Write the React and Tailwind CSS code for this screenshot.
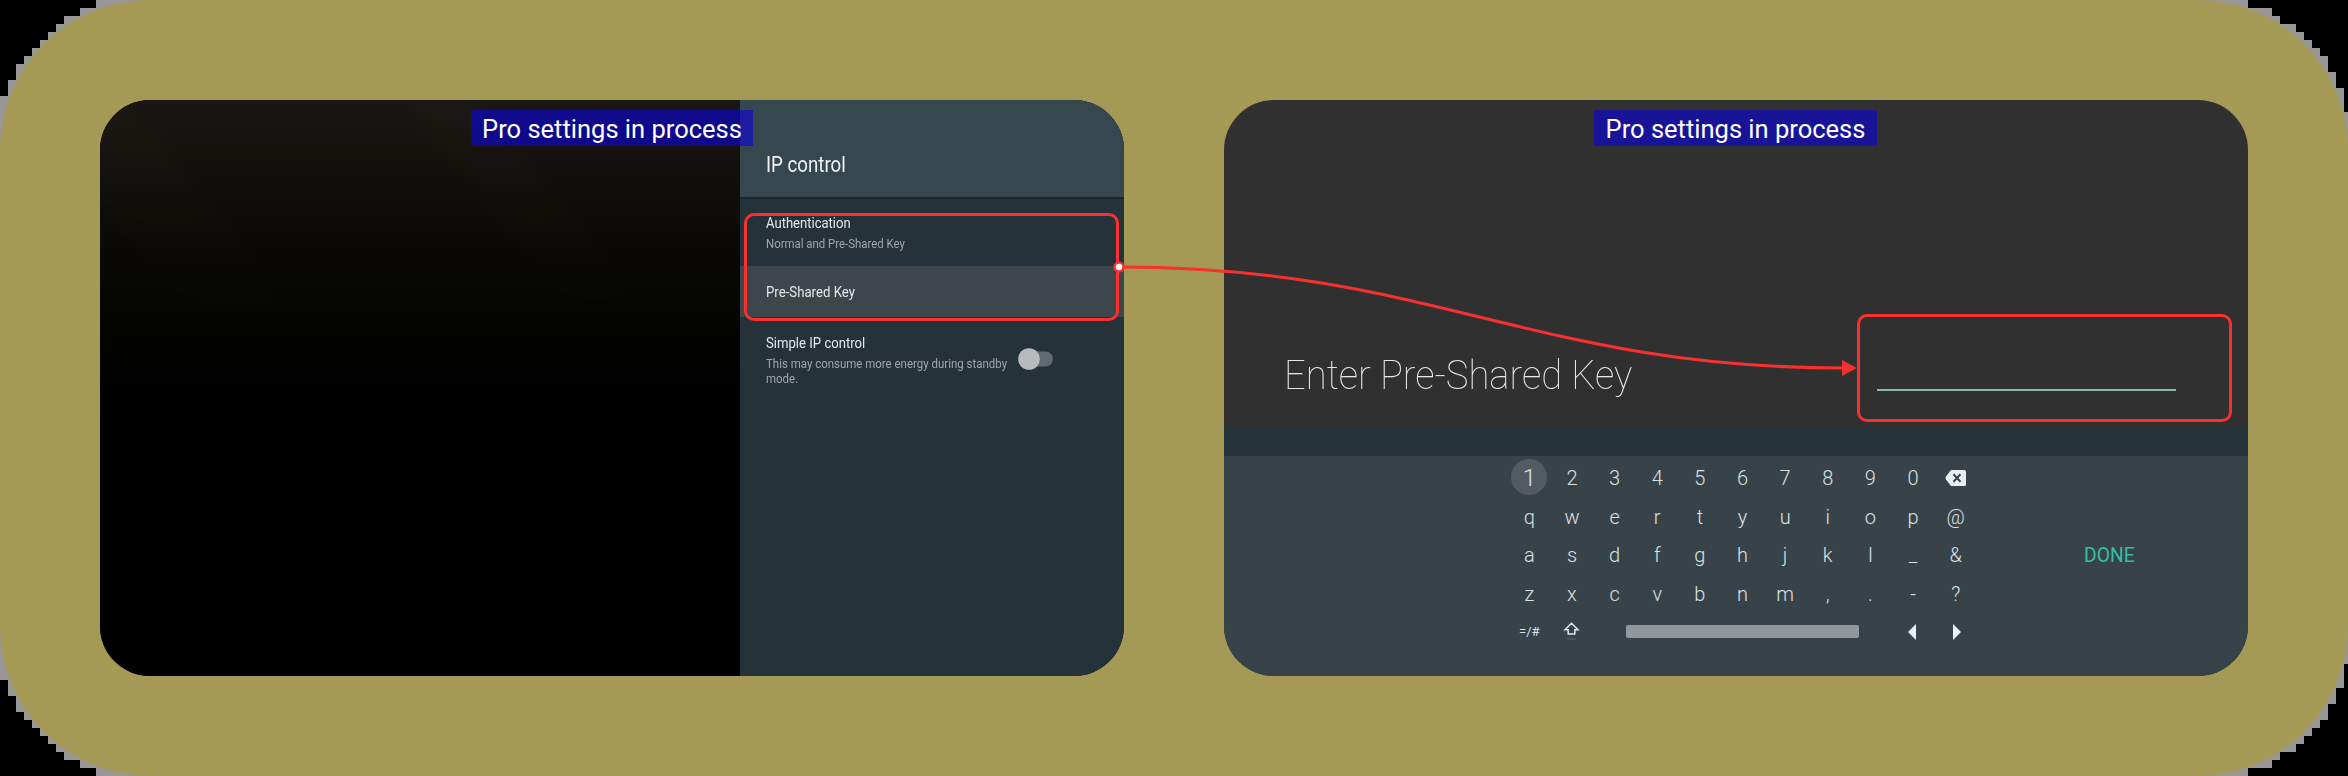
const RED = "#f83030";

const cornerLeft = [[0, 96], [8, 80], [16, 64], [24, 56], [32, 48], [40, 40], [48, 32], [56, 24], [64, 16], [72, 16], [80, 8], [88, 8]];
const cornerRight = [[0, 2248], [8, 2272], [16, 2280], [24, 2296], [32, 2304], [40, 2312], [48, 2320], [56, 2328], [64, 2328], [72, 2336], [80, 2336], [88, 2344], [96, 2344], [104, 2344]];

const rows = ["1234567890", "qwertyuiop@", "asdfghjkl_&", "zxcvbnm,.-?"];

function Backdrop() {
  return (
    <svg className="absolute inset-0" width="2348" height="776" shapeRendering="crispEdges">
      {cornerLeft.map(([y, w]) => (
        <g key={y}>
          <rect x="0" y={y} width={w} height="8" />
          <rect x="0" y={768 - y} width={w} height="8" />
        </g>
      ))}
      {cornerRight.map(([y, x]) => (
        <g key={y}>
          <rect x={x} y={y} width={2348 - x} height="8" />
          <rect x={x} y={768 - y} width={2348 - x} height="8" />
        </g>
      ))}
    </svg>
  );
}

function Label({ className }) {
  return (
    <div className={"absolute top-[10px] flex h-[36px] items-center justify-center rounded-[1px] bg-[rgba(12,4,215,0.62)] pt-[2px] text-[25.5px] text-white " + className}>
      <span className="whitespace-nowrap">Pro settings in process</span>
    </div>
  );
}

function T({ children, sx, className }) {
  return (
    <div className={"origin-left whitespace-nowrap " + className} style={{ transform: `scaleX(${sx})` }}>
      {children}
    </div>
  );
}

function Wallpaper() {
  return (
    <div className="w-[640px] bg-linear-to-b from-[#1a1613] via-[#040402] via-40% to-black to-60%">
      <svg width="640" height="576">
        <defs>
          <linearGradient id="ray" x1="0" y1="0" x2="0" y2="240" gradientUnits="userSpaceOnUse">
            <stop offset="0" stopColor="#fff8e0" stopOpacity="0.014" />
            <stop offset="1" stopColor="#fff8e0" stopOpacity="0" />
          </linearGradient>
          <filter id="soft" x="-20%" y="-20%" width="140%" height="140%">
            <feGaussianBlur stdDeviation="9" />
          </filter>
        </defs>
        <g fill="url(#ray)" filter="url(#soft)">
          <path d="M-10 -10L40 20L210 220L90 220L-10 90Z" />
          <path d="M300 -10H370L540 200H460Z" />
        </g>
      </svg>
    </div>
  );
}

function SettingsScreen() {
  return (
    <section className="relative flex h-[576px] w-[1024px] overflow-hidden rounded-[50px] bg-black">
      <Wallpaper />
      <div className="w-[384px] bg-[#263239]">
        <header className="flex h-[99px] items-center border-b-2 border-[#1d282e] bg-[#37474f] pt-[31px] pl-[26px] text-[#eef2f3]">
          <T sx={0.85} className="text-[22px]">IP control</T>
        </header>
        <div className="h-[67px] pt-[14px] pl-[26px]">
          <T sx={0.87} className="text-[15px] leading-[20px] text-[#e4e8ea]">Authentication</T>
          <T sx={0.95} className="mt-[2px] text-[12px] leading-[18px] text-[#a0a7ab]">Normal and Pre-Shared Key</T>
        </div>
        <div className="flex h-[51px] items-center bg-[#3d464b] pt-[1px] pl-[26px]">
          <T sx={0.88} className="text-[15px] text-[#e4e8ea]">Pre-Shared Key</T>
        </div>
        <div className="flex items-start justify-between pt-[16px] pr-[70px] pl-[26px]">
          <div className="w-[245px]">
            <T sx={0.875} className="text-[15px] leading-[20px] text-[#e4e8ea]">Simple IP control</T>
            <T sx={0.917} className="mt-[3px] text-[12.5px] leading-[15px] text-[#a0a7ab]">This may consume more energy during standby<br />mode.</T>
          </div>
          <svg className="mt-[14px]" width="36" height="24">
            <rect x="8" y="4.500" width="27" height="15" rx="7.500" fill="#616a6e" />
            <circle cx="11" cy="12" r="10.800" fill="#b9babb" />
          </svg>
        </div>
      </div>
      <Label className="left-[371px] w-[282px]" />
    </section>
  );
}

function Keyboard() {
  return (
    <div className="flex h-[220px] bg-[#384349]">
      <div className="ml-[284px] grid w-[469px] grid-cols-11 grid-rows-[42px_38px_38px_39px_37px] text-[20px] font-light text-[#dbe1e3]">
        {rows.map((row, r) => [
          ...row.split("").map((k) => (
            <div key={r + k} className={"flex items-center justify-center " + (r === 0 ? "pt-[2px]" : "")}>
              {k === "1" ? <span className="-mt-[2px] flex h-[36px] w-[36px] shrink-0 items-center justify-center rounded-full bg-[#525b61] pt-[2px] text-[24px]">1</span> : k}
            </div>
          )),
          r === 0 && (
            <div key="del" className="flex items-center justify-center pt-[2px]">
              <svg width="21" height="16" viewBox="0 0 21 16">
                <path d="M6 0H19.500Q21 0 21 1.500V14.500Q21 16 19.500 16H6L1 9.500Q0 8 1 6.500Z" fill="#eaeff1" />
                <path d="M8.500 4.300L15.500 11.700M15.500 4.300L8.500 11.700" stroke="#384349" strokeWidth="2" />
              </svg>
            </div>
          ),
        ])}
        <div className="flex items-center justify-center text-[13px] font-normal">=/#</div>
        <div className="flex items-center justify-center">
          <svg width="17" height="19" viewBox="0 0 17 19">
            <path d="M8.500 1.200L15 7.800H11.800V12H5.200V7.800H2Z" fill="none" stroke="#e1e7e9" strokeWidth="1.500" />
            <path d="M4.500 17H13" stroke="#4a545a" strokeWidth="2" />
          </svg>
        </div>
        <div className="col-span-7 flex items-center pl-[33px]">
          <div className="h-[13px] w-[233px] rounded-[2px] bg-[#91989b]" />
        </div>
        <div className="flex items-center justify-center pr-[2px]">
          <svg width="8" height="16"><path d="M8 0V16L0 8Z" fill="#eaeff1" /></svg>
        </div>
        <div className="flex items-center justify-center pl-[2px]">
          <svg width="8" height="16"><path d="M0 0V16L8 8Z" fill="#eaeff1" /></svg>
        </div>
      </div>
      <div className="mt-[90px] ml-[107px] text-[19.3px] leading-[20px] text-[#32bfa5]">DONE</div>
    </div>
  );
}

function KeyEntryScreen() {
  return (
    <section className="relative h-[576px] w-[1024px] overflow-hidden rounded-[50px] bg-[#303030]">
      <div className="flex h-[328px] items-end justify-between pr-[72px] pl-[60px]">
        <T sx={0.955} className="pb-[26px] text-[40px] leading-[52px] font-thin text-[#e8e8e8]">Enter Pre-Shared Key</T>
        <div className="mb-[37px] h-[2px] w-[299px] bg-[#87b8ab]" />
      </div>
      <div className="h-[28px] bg-[#25323a]" />
      <Keyboard />
      <Label className="left-[370px] w-[283px]" />
    </section>
  );
}

function Callouts() {
  return (
    <svg className="absolute inset-0" width="2348" height="776" fill="none" stroke={RED} strokeWidth="3">
      <rect x="745.500" y="214.500" width="372" height="105" rx="8.500" />
      <rect x="1858.500" y="315.500" width="372" height="105" rx="8.500" />
      <path d="M1119 267C1431 267 1532 368 1844 368" />
      <path d="M1842 360V376L1857 368Z" fill={RED} stroke="none" />
      <circle cx="1119" cy="267" r="4.500" fill="white" stroke={RED} strokeWidth="2.500" />
    </svg>
  );
}

export default function App() {
  return (
    <main className="relative h-[776px] w-[2348px] overflow-hidden bg-[#999697] font-['Roboto',sans-serif]">
      <Backdrop />
      <div className="relative flex h-[776px] gap-[100px] rounded-[150px] bg-[#a49a55] p-[100px]">
        <SettingsScreen />
        <KeyEntryScreen />
      </div>
      <Callouts />
    </main>
  );
}
